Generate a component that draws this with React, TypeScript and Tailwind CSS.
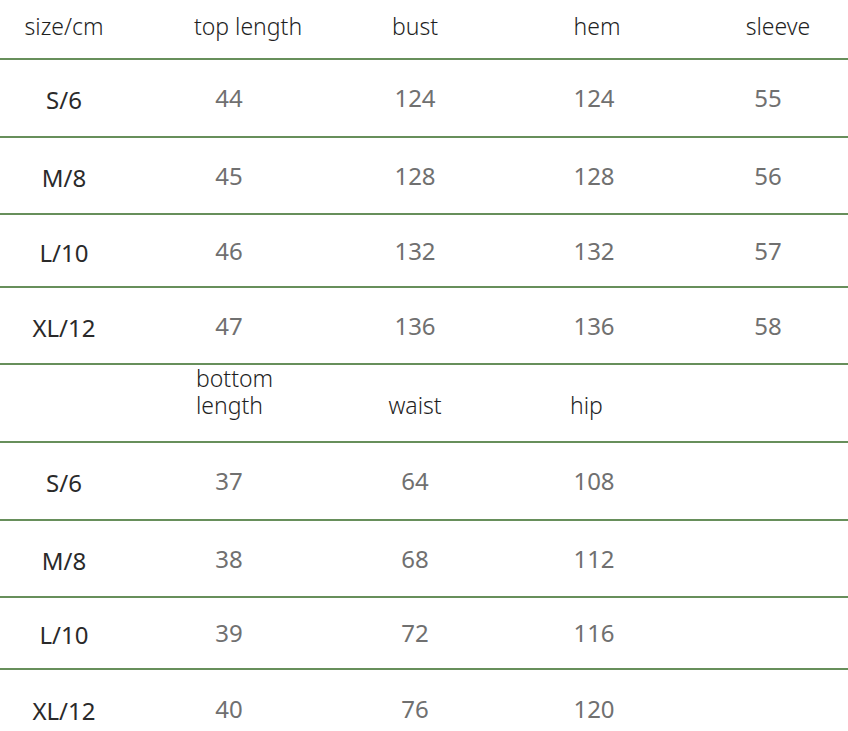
const top = [
  ["S/6", "44", "124", "124", "55"],
  ["M/8", "45", "128", "128", "56"],
  ["L/10", "46", "132", "132", "57"],
  ["XL/12", "47", "136", "136", "58"],
];

const bottom = [
  ["S/6", "37", "64", "108"],
  ["M/8", "38", "68", "112"],
  ["L/10", "39", "72", "116"],
  ["XL/12", "40", "76", "120"],
];

const topHeights = ["h-[78px]", "h-[77px]", "h-[73px]", "h-[77px]"];
const bottomHeights = ["h-[78px]", "h-[77px]", "h-[72px]", "h-[78px]"];

const cols = "grid grid-cols-[128px_202px_170px_188px_160px]";
const line = "border-b-2 border-[#678f5b]";

function DataRow({ cells, height, last }: { cells: string[]; height: string; last?: boolean }) {
  return (
    <div className={`${cols} ${height} ${last ? "" : line} items-center text-[24px] font-normal`}>
      {cells.map((c, i) => (
        <div key={i} className={`text-center ${i === 0 ? "pt-[4px] text-[#2a2a2a]" : "text-[#707070]"}`}>
          {c}
        </div>
      ))}
    </div>
  );
}

export default function App() {
  return (
    <div className="h-[731px] w-[848px] overflow-hidden bg-white font-['Noto_Sans',sans-serif] font-light leading-none">
      <div className={`${cols} h-[60px] ${line} items-center pb-[5px] text-[23px] text-[#1f1f1f]`}>
        <div className="text-center">size/cm</div>
        <div className="pl-[38px] text-center">top length</div>
        <div className="text-center">bust</div>
        <div className="pl-[6px] text-center">hem</div>
        <div className="pl-[20px] text-center">sleeve</div>
      </div>
      {top.map((r, i) => (
        <DataRow key={r[0]} cells={r} height={topHeights[i]} />
      ))}
      <div className={`${cols} h-[78px] ${line} items-end pb-[22px] text-[23px] text-[#1f1f1f]`}>
        <div />
        <div className="pl-[68px] leading-[27px]">
          <div>bottom</div>
          <div>length</div>
        </div>
        <div className="text-center leading-[27px]">waist</div>
        <div className="pl-[70px] leading-[27px]">hip</div>
        <div />
      </div>
      {bottom.map((r, i) => (
        <DataRow key={r[0]} cells={[...r, ""]} height={bottomHeights[i]} last={i === bottom.length - 1} />
      ))}
    </div>
  );
}
